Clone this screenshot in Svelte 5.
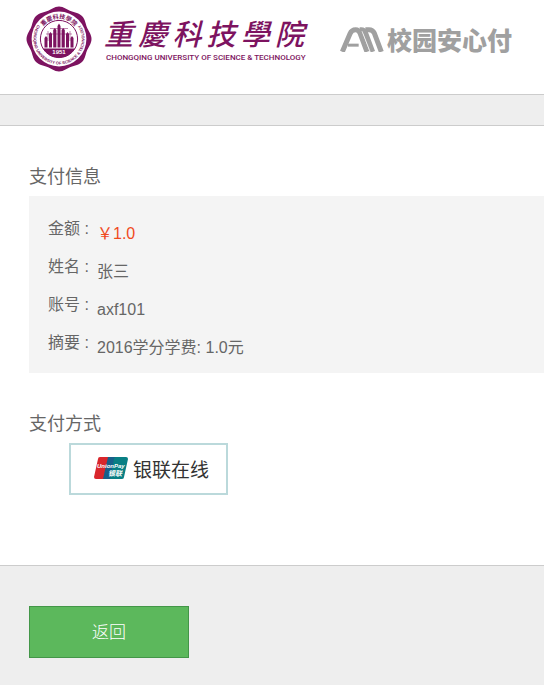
<script>
    const school = ["重", "慶", "科", "技", "學", "院"];

    const details = [
        {label: "金额", value: "￥1.0", price: true},
        {label: "姓名", value: "张三"},
        {label: "账号", value: "axf101"},
        {label: "摘要", value: "2016学分学费: 1.0元"},
    ];

    // eight-lobed edge of the school seal
    function sealEdge() {
        const points = [];
        for (let i = 0; i < 120; i++) {
            const angle = (i / 120) * Math.PI * 2;
            const r = 31.4 + 1.1 * Math.cos(angle * 8);
            points.push(`${(33 + r * Math.cos(angle)).toFixed(2)},${(33 + r * Math.sin(angle)).toFixed(2)}`);
        }
        return points.join(" ");
    }
</script>

<div class="page">
    <header class="header">
        <div class="school">
            <svg class="seal" viewBox="0 0 66 66" role="img" aria-label="重慶科技學院">
                <defs>
                    <path id="ring-top" d="M12.8 33 A20.2 20.2 0 0 1 53.2 33" />
                    <path id="ring-bottom" d="M14.4 15.5 A25.5 25.5 0 1 0 51.6 15.5" />
                </defs>
                <polygon points={sealEdge()} fill="#7d1360" />
                <circle cx="33" cy="33" r="27.4" fill="#fff" />
                <circle cx="33" cy="33" r="18.6" fill="#fff" stroke="#7d1360" stroke-width="1" />
                <text class="ring-name" text-anchor="middle"><textPath href="#ring-top" startOffset="50%">重慶科技學院</textPath></text>
                <text class="ring-english" text-anchor="middle"><textPath href="#ring-bottom" startOffset="50%">CHONGQING UNIVERSITY OF SCIENCE &amp; TECHNOLOGY</textPath></text>
                <path d="M18.5 41.5V32l1.5-2 1.5 2v9.5zM23 41.5V28l1.5-2 1.5 2v13.5zM27.2 41.5V24l1.6-2 1.6 2v17.5zM31.5 41.5V20l1.5-2.5 1.5 2.5v21.5zM35.6 41.5V24l1.6-2 1.6 2v17.5zM40 41.5V28l1.5-2 1.5 2v13.5zM44.5 41.5V32l1.5-2 1.5 2v9.5z" fill="#7d1360" />
                <path d="M20 28h26M24 22.5h18M22 25v10M44 25v10" stroke="#7d1360" stroke-width=".5" fill="none" />
                <path d="M17 42.5h32a18.6 18.6 0 0 1-32 0z" fill="#7d1360" />
                <text class="year" x="33" y="48" text-anchor="middle">1951</text>
            </svg>
            <div class="school-name">
                <div class="calligraphy">
                    {#each school as char}
                        <span>{char}</span>
                    {/each}
                </div>
                <div class="english">CHONGQING UNIVERSITY OF SCIENCE &amp; TECHNOLOGY</div>
            </div>
        </div>
        <div class="brand">
            <svg class="mark" viewBox="0 0 132 74" aria-hidden="true">
                <g fill="none" stroke="#a0a0a0" stroke-width="15">
                    <path d="M7 74L30 20Q35 8 47 8Q56 8 60 18L81 74" />
                    <path d="M24 54H56" stroke-width="9" />
                    <path d="M60 8Q72 6 77 18L98 74" />
                    <path d="M76 8H87Q98 8 103 18L124 74" />
                </g>
                <path d="M66 12L91 75" stroke="#fff" stroke-width="2" />
            </svg>
            <span>校园安心付</span>
        </div>
    </header>
    <div class="strip"></div>

    <main class="content">
        <h2>支付信息</h2>
        <dl class="details">
            {#each details as item}
                <div class="row">
                    <dt>{item.label} :</dt>
                    <dd class:price={item.price}>{item.value}</dd>
                </div>
            {/each}
        </dl>

        <h2>支付方式</h2>
        <button type="button" class="method">
            <svg class="unionpay" viewBox="0 0 34 22" aria-hidden="true">
                <path d="M6 0H18L13 22H2Q0 22 0 20L4 2Q4 0 6 0z" fill="#d9262c" />
                <path d="M14 0H25L20 22H9z" fill="#17608a" />
                <path d="M22 0H32Q34 0 34 2L30 20Q30 22 28 22H16L20 2Q20 0 22 0z" fill="#087f84" />
                <text class="up-latin" x="3" y="11">UnionPay</text>
                <text class="up-han" x="14" y="19">银联</text>
            </svg>
            <span>银联在线</span>
        </button>
    </main>

    <footer class="footer">
        <button type="button" class="back">返回</button>
    </footer>
</div>

<style>
    :global(body) {
        margin: 0;
        background: #fff;
        font-family: "Liberation Sans", "Noto Sans CJK SC", sans-serif;
    }

    .page {
        min-height: 100vh;
        display: flex;
        flex-direction: column;
        overflow: hidden;
        color: #666;
        font-size: 16px;
    }

    .header {
        display: flex;
        align-items: center;
        gap: 36px;
        padding: 6px 26px 22px;
        white-space: nowrap;
    }

    .school {
        display: flex;
        align-items: center;
        gap: 12px;
    }

    .seal {
        width: 66px;
        height: 66px;
        flex: none;
    }

    .ring-name {
        font: bold 6px "Noto Sans CJK TC", sans-serif;
        fill: #7d1360;
    }

    .ring-english {
        font: bold 4px "Liberation Sans", sans-serif;
        fill: #7d1360;
    }

    .year {
        font: bold 6px "Liberation Sans", sans-serif;
        fill: #fff;
    }

    .school-name {
        width: 200px;
        color: #7d1360;
    }

    .calligraphy {
        display: flex;
        justify-content: space-between;
        font: italic 500 29px/38px "Noto Sans CJK TC", sans-serif;
    }

    .english {
        padding-left: 2px;
        font: 500 8px/14px Roboto, sans-serif;
    }

    .brand {
        display: flex;
        align-items: center;
        gap: 3px;
        color: #a0a0a0;
        font: 900 25px/30px "Noto Sans CJK SC", sans-serif;
    }

    .mark {
        width: 44px;
        height: 25px;
        flex: none;
    }

    .strip {
        height: 30px;
        background: #eee;
        border-top: 1px solid #ccc;
        border-bottom: 1px solid #ccc;
    }

    .content {
        padding: 36px 0 70px 29px;
    }

    h2 {
        margin: 0;
        font-size: 18px;
        line-height: 30px;
        font-weight: 400;
    }

    .details {
        margin: 4px 0 36px;
        padding: 15px 19px 10px;
        background: #f4f4f4;
    }

    .row {
        display: grid;
        grid-template-columns: 49px 1fr;
        height: 38px;
        line-height: 30px;
    }

    dt {
        padding-top: 3px;
    }

    dd {
        margin: 0;
        padding-top: 8px;
    }

    .price {
        color: #f04a1d;
    }

    button {
        box-sizing: border-box;
        font-family: inherit;
        border-radius: 0;
        cursor: pointer;
    }

    .method {
        display: flex;
        align-items: center;
        gap: 5px;
        width: 159px;
        height: 52px;
        margin: 4px 0 0 40px;
        padding: 0 0 2px 23px;
        border: 2px solid #bbd9db;
        background: #fff;
        color: #333;
        font-size: 19px;
    }

    .unionpay {
        width: 34px;
        height: 22px;
    }

    .up-latin {
        font: italic bold 6px "Liberation Sans", sans-serif;
        fill: #fff;
    }

    .up-han {
        font: italic bold 7px "Noto Sans CJK SC", sans-serif;
        fill: #fff;
    }

    .footer {
        flex: 1;
        padding: 40px 29px 27px;
        background: #eee;
        border-top: 1px solid #ccc;
    }

    .back {
        display: block;
        width: 160px;
        height: 52px;
        padding: 0 0 3px;
        border: 1px solid #439648;
        background: #5cb85c;
        color: #fff;
        font-size: 17px;
        font-weight: 300;
    }
</style>
